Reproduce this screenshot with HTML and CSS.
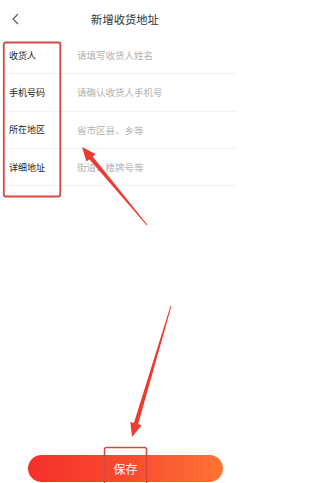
FILE: index.html
```html
<!DOCTYPE html>
<html lang="zh">
<head>
<meta charset="utf-8">
<link rel="stylesheet" href="styles.css">
</head>
<body>
<div class="page">
  <header class="header">
    <div class="back">
      <svg width="7" height="12" viewBox="0 0 7 12"><path d="M6 1 L1 6 L6 11" fill="none" stroke="#555" stroke-width="1.1"/></svg>
    </div>
    <div class="title">新增收货地址</div>
    <div class="spacer"></div>
  </header>
  <div class="form">
    <div class="row"><span class="label">收货人</span><span class="ph">请填写收货人姓名</span></div>
    <div class="row"><span class="label">手机号码</span><span class="ph">请确认收货人手机号</span></div>
    <div class="row"><span class="label">所在地区</span><span class="ph">省市区县、乡等</span></div>
    <div class="row"><span class="label">详细地址</span><span class="ph">街道、楼牌号等</span></div>
  </div>
  <div class="footer">
    <div class="btn">保存</div>
  </div>
  <svg class="marks" width="236" height="483" viewBox="0 0 236 483">
    <rect x="3.8" y="42.5" width="56.5" height="154" rx="2" fill="none" stroke="#d24a42" stroke-width="1.8"/>
    <rect x="104.5" y="447.5" width="42" height="45" rx="2" fill="none" stroke="#d24a42" stroke-width="1.5"/>
    <polygon fill="#ee3b32" points="82,147 95.6,153.9 92.7,156.4 147.4,224.7 146.6,225.3 89.3,159.2 86.4,161.6"/>
    <polygon fill="#ee3b32" points="132,437 141.7,425.3 138.1,424.2 171.5,306.1 170.5,305.9 133.9,423 130.3,421.9"/>
  </svg>
</div>
</body>
</html>
```

FILE: styles.css
```css
html, body {
  margin: 0;
  padding: 0;
  background: #fff;
}
.page {
  position: relative;
  width: 236px;
  height: 483px;
  display: flex;
  flex-direction: column;
  font-family: "Noto Sans CJK SC", "Noto Sans", sans-serif;
  overflow: hidden;
}
.header {
  height: 37px;
  display: grid;
  grid-template-columns: 30px 1fr 16px;
  align-items: center;
}
.back {
  display: flex;
  align-items: center;
  padding-left: 12px;
}
.title {
  text-align: center;
  font-size: 11.3px;
  color: #333;
}
.form {
  display: flex;
  flex-direction: column;
}
.row {
  height: 37.3px;
  box-sizing: border-box;
  display: flex;
  align-items: center;
  margin-left: 8px;
  border-bottom: 1px solid #f1f1f1;
}
.label {
  width: 68px;
  padding-left: 1px;
  font-size: 9px;
  color: #222;
}
.ph {
  font-size: 9.5px;
  color: #b3b3b3;
}
.footer {
  margin-top: auto;
  padding: 0 13px 1px 28px;
}
.btn {
  height: 27px;
  border-radius: 14px;
  background: linear-gradient(90deg, #f5302b 0%, #f84a2e 50%, #ff7433 100%);
  color: #fff;
  font-size: 12px;
  display: flex;
  align-items: center;
  justify-content: center;
}
.marks {
  position: absolute;
  left: 0;
  top: 0;
  pointer-events: none;
}
```
